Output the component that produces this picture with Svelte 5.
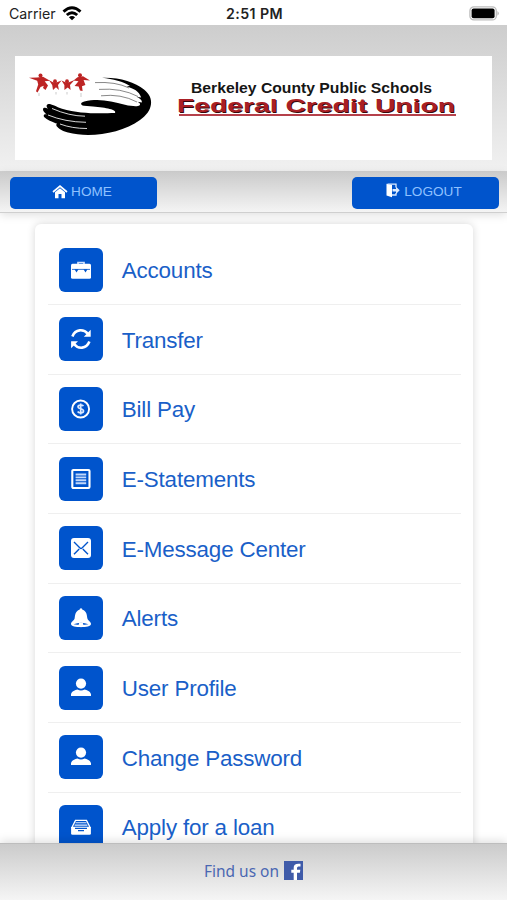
<script lang="ts">
  const items = [
    { label: 'Accounts', icon: 'briefcase' },
    { label: 'Transfer', icon: 'refresh' },
    { label: 'Bill Pay', icon: 'dollar' },
    { label: 'E-Statements', icon: 'statement' },
    { label: 'E-Message Center', icon: 'message' },
    { label: 'Alerts', icon: 'bell' },
    { label: 'User Profile', icon: 'user' },
    { label: 'Change Password', icon: 'user' },
    { label: 'Apply for a loan', icon: 'tray' },
  ]
</script>

<div class="screen">
  <div class="status">
    <div class="carrier">
      <span>Carrier</span>
      <svg width="20" height="15" viewBox="0 0 20 15" fill="none" stroke="#000" stroke-width="2.9">
        <path d="M1.5 5.6Q10 -2 18.5 5.6" />
        <path d="M4.8 9Q10 4.4 15.2 9" />
        <path d="M10 14.3L6.9 11.2Q10 8.7 13.1 11.2Z" fill="#000" stroke="none" />
      </svg>
    </div>
    <span class="time">2:51 PM</span>
    <svg class="battery" width="31" height="15" viewBox="0 0 31 15">
      <rect x="0.9" y="0.9" width="26.4" height="13" rx="4" fill="#fff" stroke="#bdbdbd" stroke-width="1.3" />
      <rect x="2.6" y="2.6" width="23" height="9.6" rx="2" />
      <path d="M28.5 5Q31 7.4 28.5 9.8Z" fill="#aaa" />
    </svg>
  </div>

  <header>
    <svg class="logo" width="477" height="104" viewBox="15 56 477 104">
      <g class="family">
        <circle cx="40.5" cy="75.6" r="2" />
        <path d="M29 77.8L37 77.6L43 76.8L50 80.8L44.7 81.2L48 85.5L45.5 90L43 88L43.8 85.7L40.5 87L37.5 92.5L36 91.3L38.2 84.5L37.2 80.8Z" />
        <circle cx="55" cy="81.2" r="1.9" />
        <path d="M49 80.2L53 82.3L57 82.3L61.5 80.5L58 84.9L58.9 90L56 87.2L53 90L52.2 84.9Z" />
        <circle cx="67" cy="81.2" r="1.9" />
        <path d="M61.5 80.5L65.5 82.3L69 82.3L74.5 80L70 84.9L70.6 90L67.7 87.4L64.4 90L64.4 84.9Z" />
        <circle cx="80" cy="75.3" r="2" />
        <path d="M73.5 80.5L77.5 77.2L83 76.3L90 80.5L83.6 79.9L85.4 85L82 86.3L82.6 91L80 90.5L78.6 86.6L74.6 85.9L78.5 81.2Z" />
        <path class="reflection" d="M39 93V96M56 92V94.5M67 92V94.5M81 93V97" />
      </g>
      <path d="M102 77.8C119 77.2 135 82 144 89.5C155 98 153 111 140 120C121 134 89 138 68 132.5C61 130.5 57 127.5 56.3 125.2C56 123.6 58 123.3 60 124.1L70 127C61 125.6 49 121.6 44.7 117.6C42.5 115.3 44.5 113.2 47 114.6C45 113 42.8 111.2 43 109.2C43.2 107.1 46 107.5 48 108.8C46.2 107 46 104.4 48.5 104C51 103.7 56 106.6 62 108.7C80 114.3 101 113.3 115 113C117.3 109.7 106 107.5 93 106.5L84 105.8C80 105.1 80.3 102.3 84.3 101.5C99 98 111 101.2 125 104.7C132 106.4 138 106.6 139.4 105.4C141 104.2 139.5 102.8 137.5 101.8L141.8 102.5C142.5 100.3 139.2 97.8 136.5 96.7L141.2 97.4C138.8 91.2 134 88.6 126.5 86.6L130 86C123.5 81.8 113 79 102 77.8Z" />
      <path d="M52 108.5Q69 116 85 116.2M48 115Q65 122 86 122.3M60 124Q72 128.5 87 128.5" fill="none" stroke="#eee" stroke-width=".9" />
      <path d="M95 82.6Q116 81.5 129 88M99 89.4Q121 87.7 138 96.5M101 95.8Q121 93.5 137 102" fill="none" stroke="#555" stroke-width=".7" />
      <text class="school" x="191" y="92.8" textLength="241" lengthAdjust="spacingAndGlyphs">Berkeley County Public Schools</text>
      <text class="union-shade" x="178" y="112.6" textLength="278" lengthAdjust="spacingAndGlyphs">Federal Credit Union</text>
      <text class="union" x="177" y="111.8" textLength="278" lengthAdjust="spacingAndGlyphs">Federal Credit Union</text>
      <rect x="179" y="114" width="277" height="2" fill="#b5404a" />
    </svg>
  </header>

  <nav>
    <button>
      <svg width="16" height="14" viewBox="0 0 16 14">
        <path d="M1 7L8 1.2L15 7" fill="none" stroke="#fff" stroke-width="1.7" />
        <path d="M3 7.2L8 3.2L13 7.2V13.2H9.5V9H6.5V13.2H3Z" fill="#fff" />
      </svg>
      <span>HOME</span>
    </button>
    <button>
      <svg class="door" width="14" height="15" viewBox="0 0 14 15">
        <path d="M.5 .8L6 2V14.3L.5 12.5Z" fill="#fff" />
        <path d="M1.5 1.2H10V4.5M10 10V12H6" fill="none" stroke="#dcecff" stroke-width="1.3" />
        <path d="M6.5 6H10V3.7L13.7 7.3L10 11V8.6H6.5Z" fill="#dcecff" />
      </svg>
      <span>LOGOUT</span>
    </button>
  </nav>

  <main>
    <ul>
      {#each items as { label, icon }}
        <li>
          <div class="tile">
            <svg width="22" height="22" viewBox="0 0 22 22">
              {#if icon === 'briefcase'}
                <path d="M8 5V3.5H14V5" fill="none" stroke="#cfe1ff" stroke-width="1.7" />
                <rect x="1" y="4.7" width="20" height="15" rx="1.5" fill="#fff" />
                <path d="M2 10.4H20" stroke="#0054cc" stroke-width=".8" />
                <path d="M4.5 10.2H8.5L6.5 13.5ZM13.5 10.2H17.5L15.5 13.5Z" fill="#0054cc" />
              {:else if icon === 'refresh'}
                <path d="M2.4 8.4C5.4 .8 13.6 .7 18 6M19.4 13.6C16.4 21.2 8.2 21.3 4 16" fill="none" stroke="#fff" stroke-width="2.6" />
                <path d="M20.7 1.7V8.8H13.8ZM1.1 20.3V13.2H8Z" fill="#fff" />
              {:else if icon === 'dollar'}
                <circle cx="10.6" cy="11" r="8.5" fill="none" stroke="#fff" stroke-width="1.9" />
                <path d="M13.4 8.1C12.5 6.7 8 6.7 8 9C8 11.3 13.5 10.2 13.5 12.9C13.5 15.4 8.6 15.3 7.7 13.5M10.7 5.6V16.4" fill="none" stroke="#dceaff" stroke-width="1.7" />
              {:else if icon === 'statement'}
                <rect x="2.3" y="2" width="17.2" height="18" rx="1" fill="none" stroke="#fff" stroke-width="2.1" />
                <path d="M5.6 6.5H16.2M5.6 9.4H16.2M5.6 12.3H16.2M5.6 15.2H16.2" stroke="#c2d8fb" stroke-width="1.9" />
              {:else if icon === 'message'}
                <rect x="1" y="1" width="20" height="20" rx="3" fill="#fff" />
                <path d="M4 5L10 11Q11 12 12 11L18 5M4 17.3L9.2 12M18 17.3L12.8 12" fill="none" stroke="#0054cc" stroke-width="1.4" />
              {:else if icon === 'bell'}
                <path d="M11 1.2C12 1.2 12.4 2 12.4 2.8C16.8 4 16.8 8.2 17.4 11.5C17.9 13.8 21 14.6 21 16.9C21 19.2 16 20 11 20C6 20 1 19.2 1 16.9C1 14.6 4.1 13.8 4.6 11.5C5.2 8.2 5.2 4 9.6 2.8C9.6 2 10 1.2 11 1.2Z" fill="#fff" />
                <path d="M3.5 17.2Q11 14.2 18.5 17.2Q11 18.8 3.5 17.2Z" fill="#0054cc" />
                <circle cx="11" cy="17.9" r="2.4" fill="#fff" />
              {:else if icon === 'user'}
                <circle cx="11" cy="6.6" r="5.1" fill="#fff" />
                <path d="M1 19V17.3C1.7 14.3 5.2 13 7.4 12.5Q11 14.5 14.6 12.5C16.8 13 20.3 14.3 21 17.3V19Z" fill="#fff" />
              {:else}
                <path d="M5.5 4.4H16.5L20 11.3H2Z" fill="none" stroke="#fff" stroke-width="1.3" />
                <path d="M5.5 6.8H16.5M4.6 9.1H17.4" stroke="#dceaff" stroke-width="1.1" />
                <path d="M1.1 11H20.9V17.4Q20.9 18.8 19.5 18.8H2.5Q1.1 18.8 1.1 17.4Z" fill="#fff" />
                <path d="M5 12.3H17M8 14.6H14" stroke="#0054cc" stroke-width="1.2" />
              {/if}
            </svg>
          </div>
          <span>{label}</span>
        </li>
      {/each}
    </ul>
  </main>

  <footer>
    <svg width="100" height="24" viewBox="0 0 100 24">
      <text x="0" y="18" textLength="75" lengthAdjust="spacingAndGlyphs">Find us on</text>
      <rect x="80" y="2" width="19" height="19" fill="#3f5ba9" />
      <path d="M89.7 21V13.7H87.3V10.7H89.7V8.8C89.7 5.6 91.8 4.2 96.5 4.8V7.5C94.1 7.2 93 7.6 93 9.2V10.7H96.3L95.9 13.7H93V21Z" fill="#fff" />
    </svg>
  </footer>
</div>

<style>
  :global(body) {
    margin: 0;
    background: #fff;
  }
  .screen {
    width: 507px;
    height: 900px;
    display: flex;
    flex-direction: column;
    overflow: hidden;
    background: #fff;
    font-family: 'Liberation Sans', Arial, sans-serif;
  }
  .status {
    flex: none;
    height: 25px;
    display: grid;
    grid-template-columns: 1fr auto 1fr;
    align-items: center;
    box-sizing: border-box;
    padding: 2px 7px 0 9px;
    font-family: Inter, sans-serif;
    font-size: 14.2px;
    color: #222;
  }
  .carrier {
    display: flex;
    align-items: center;
    gap: 6px;
  }
  .time {
    font-weight: 600;
    letter-spacing: 0.4px;
  }
  .battery {
    justify-self: end;
  }
  header {
    flex: none;
    box-sizing: border-box;
    height: 147px;
    padding: 31px 15px 0;
    background: linear-gradient(#cdcdcd, #f1f1f1);
    border-bottom: 1px solid #d2d2d2;
  }
  .logo {
    display: block;
    background: #fff;
  }
  .family {
    fill: #bd2424;
  }
  .reflection {
    stroke: #ddd;
    stroke-width: 1.5;
  }
  .school {
    font-size: 14px;
    font-weight: bold;
    fill: #151515;
  }
  .union,
  .union-shade {
    font-size: 18.5px;
    font-weight: bold;
    fill: #a91f25;
  }
  .union-shade {
    fill: #35090b;
  }
  nav {
    flex: none;
    box-sizing: border-box;
    height: 41px;
    display: flex;
    justify-content: space-between;
    align-items: flex-start;
    padding: 4.5px 8.5px 0 9.5px;
    background: linear-gradient(#cbcbcb, #f4f4f4);
    border-bottom: 1px solid #cfcfcf;
    box-shadow: 0 2px 9px rgba(0, 0, 0, 0.13);
    z-index: 1;
  }
  button {
    width: 147px;
    height: 32px;
    display: flex;
    justify-content: center;
    align-items: center;
    gap: 3px;
    padding: 0 2px 2px 0;
    border: 0;
    border-radius: 5px;
    background: #0054cc;
    color: #8fc1ff;
    font: 13.6px 'Liberation Sans', Arial, sans-serif;
  }
  .door {
    margin: 0 1px 2px 0;
  }
  main {
    flex: 1;
    min-height: 0;
    padding: 10.5px 34.5px 0 35px;
    overflow: hidden;
  }
  ul {
    list-style: none;
    margin: 0;
    padding: 12px 12px 0 13px;
    border-radius: 6px;
    background: #fff;
    box-shadow: 0 0 8px rgba(0, 0, 0, 0.16);
  }
  li {
    height: 69.65px;
    box-sizing: border-box;
    display: flex;
    align-items: center;
    gap: 18.5px;
    padding-left: 11.3px;
    border-bottom: 1.5px solid #efefef;
    color: #1a5fc8;
    font-size: 22.4px;
    letter-spacing: -0.18px;
  }
  li span {
    padding-top: 2.5px;
  }
  .tile {
    width: 44px;
    height: 44px;
    display: flex;
    justify-content: center;
    align-items: center;
    border-radius: 6px;
    background: #0054cc;
  }
  footer {
    flex: none;
    box-sizing: border-box;
    height: 57px;
    display: flex;
    justify-content: center;
    align-items: flex-start;
    padding-top: 15px;
    background: linear-gradient(#cbcbcb, #f5f5f5);
    border-top: 1px solid #bdbdbd;
    box-shadow: 0 -2px 9px rgba(0, 0, 0, 0.13);
    z-index: 1;
  }
  footer text {
    font-family: 'Noto Sans', sans-serif;
    font-size: 16.5px;
    fill: #4a67b2;
  }
</style>
